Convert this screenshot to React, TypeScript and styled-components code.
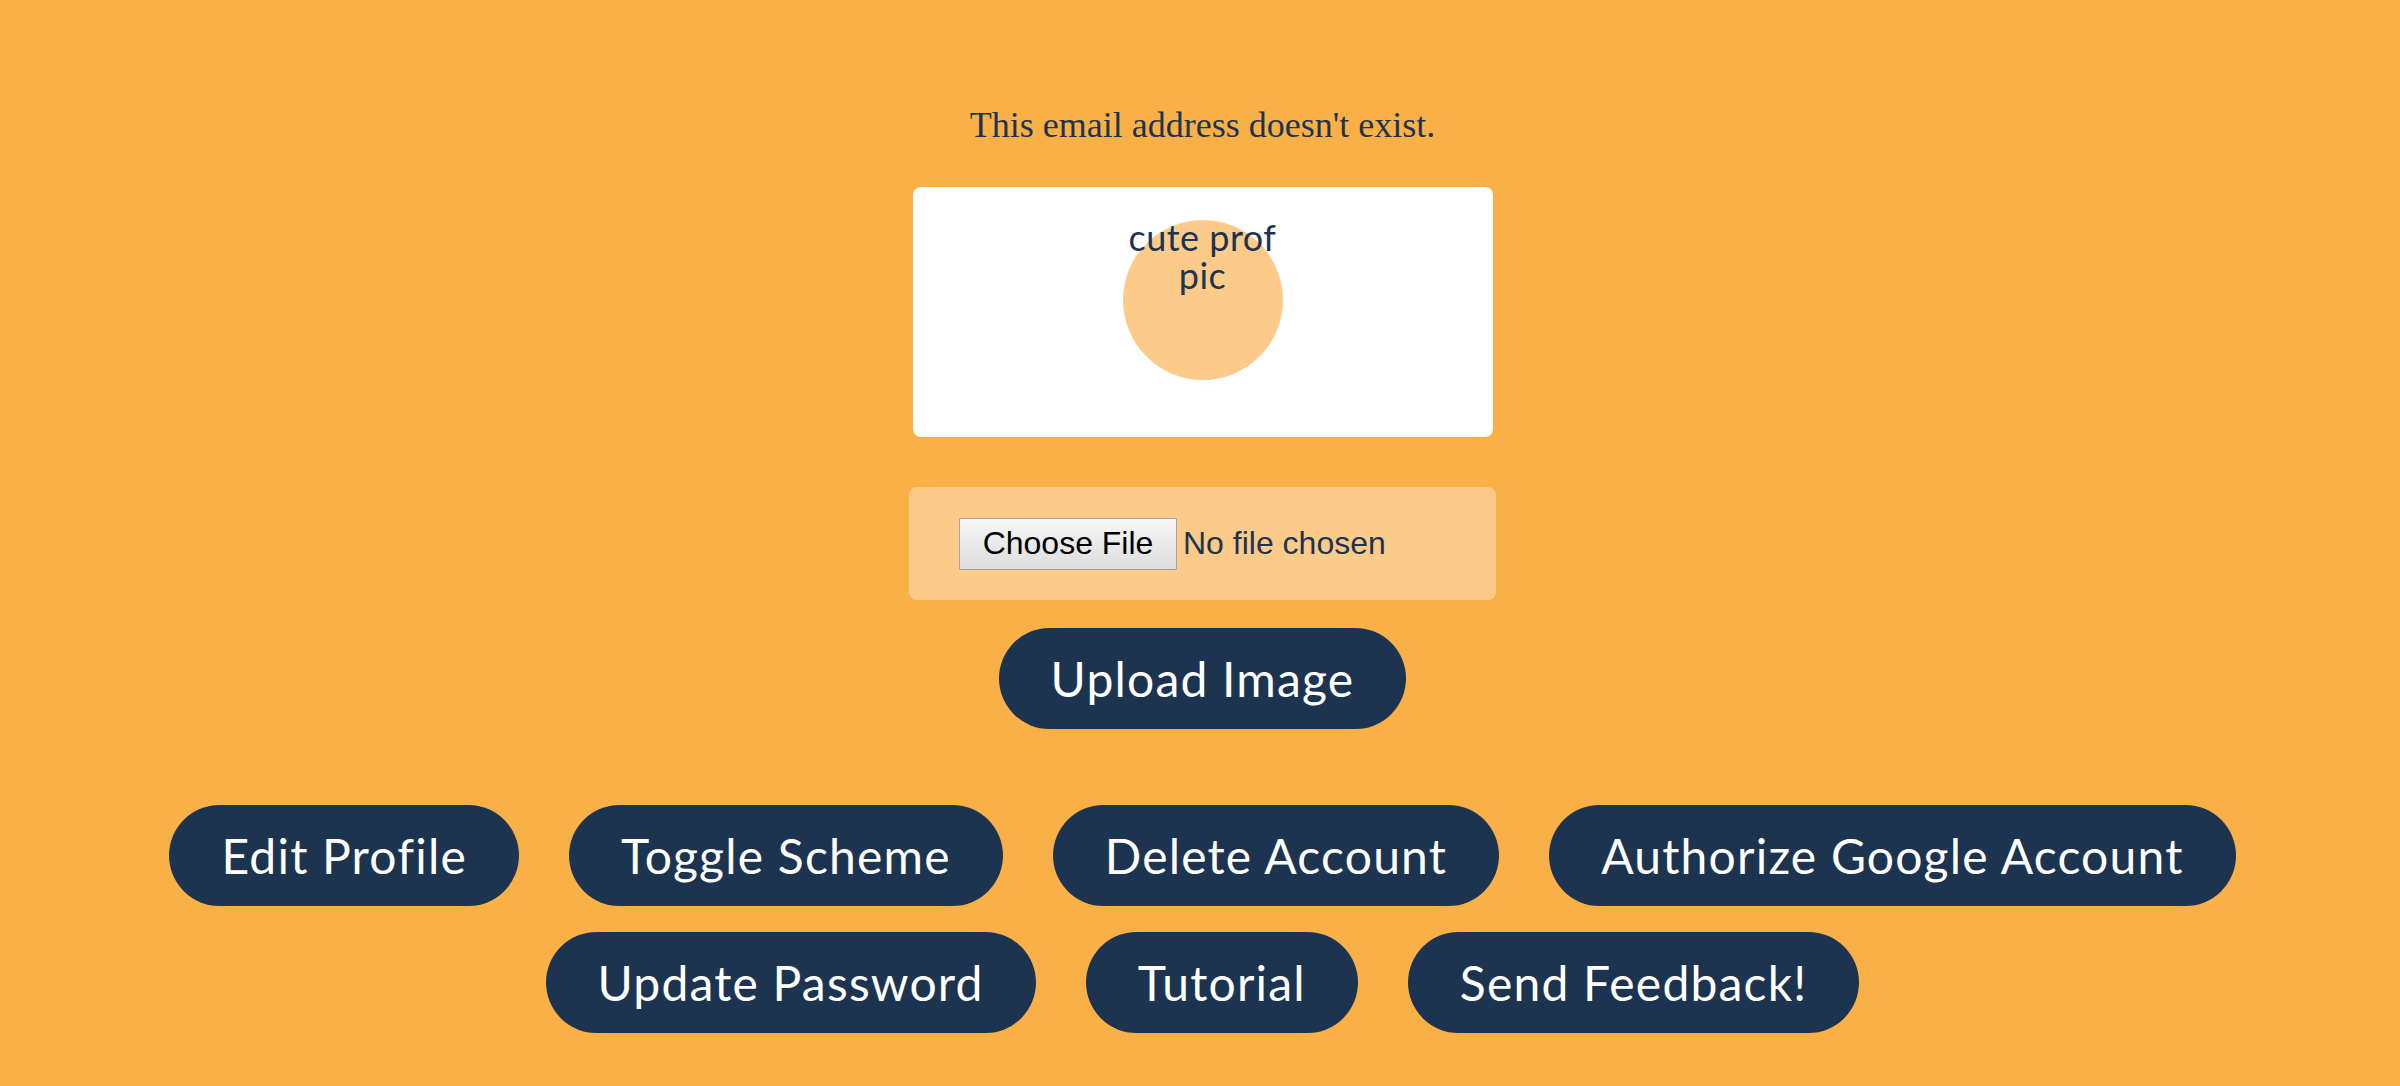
import React from "react";
import styled, { createGlobalStyle } from "styled-components";

const Global = createGlobalStyle`
  html, body { margin: 0; padding: 0; background: #f9b046; }
  body { font-family: "Lato", "Liberation Sans", sans-serif; }
`;

const Page = styled.main`
  min-height: 1086px;
  box-sizing: border-box;
  padding: 105px 0 0 5px;
  display: flex;
  flex-direction: column;
  align-items: center;
`;

const Notice = styled.p`
  margin: 0;
  font-family: "Liberation Serif", serif;
  font-size: 36px;
  line-height: 40px;
  color: #1d3451;
`;

const Card = styled.section`
  margin-top: 42px;
  width: 580px;
  height: 250px;
  box-sizing: border-box;
  padding-top: 33px;
  background: #ffffff;
  border-radius: 8px;
  display: flex;
  justify-content: center;
`;

const Avatar = styled.div`
  width: 160px;
  height: 160px;
  border-radius: 50%;
  background: #fccb8a;
  color: #1d3451;
  font-family: "Lato", sans-serif;
  font-size: 36px;
  letter-spacing: 0.5px;
  line-height: 38px;
  text-align: center;
  display: flex;
  justify-content: center;
`;

const AvatarText = styled.span`
  width: 170px;
  flex: none;
  margin-top: -2px;
`;

const FileBox = styled.div`
  margin-top: 50px;
  width: 587px;
  height: 113px;
  box-sizing: border-box;
  padding: 30px 50px;
  background: #fccb8a;
  border-radius: 8px;
  display: flex;
  align-items: center;
`;

const FileButton = styled.button`
  height: 52px;
  width: 218px;
  box-sizing: border-box;
  padding: 0;
  border: 1px solid #a3a3a3;
  border-radius: 1px;
  background: linear-gradient(#f7f7f7, #dddddd);
  font-family: "Liberation Sans", Arial, sans-serif;
  font-size: 32px;
  color: #000;
`;

const FileStatus = styled.span`
  margin-left: 6px;
  font-family: "Liberation Sans", Arial, sans-serif;
  font-size: 32px;
  color: #1d3451;
`;

const PillButton = styled.button`
  height: 101px;
  padding: 0 52px;
  border: none;
  border-radius: 51px;
  background: #1c3450;
  color: #ffffff;
  font-family: "Lato", sans-serif;
  font-size: 48px;
  letter-spacing: 1.2px;
  white-space: nowrap;
`;

const UploadButton = styled(PillButton)`
  margin-top: 28px;
`;

const ActionGrid = styled.div`
  margin-top: 76px;
  width: 100%;
  display: flex;
  flex-wrap: wrap;
  justify-content: center;
  column-gap: 50px;
  row-gap: 26px;
`;

const actions = [
  "Edit Profile",
  "Toggle Scheme",
  "Delete Account",
  "Authorize Google Account",
  "Update Password",
  "Tutorial",
  "Send Feedback!",
];

export default function App() {
  return (
    <>
      <Global />
      <Page>
        <Notice>This email address doesn't exist.</Notice>
        <Card>
          <Avatar>
            <AvatarText>cute prof pic</AvatarText>
          </Avatar>
        </Card>
        <FileBox>
          <FileButton type="button">Choose File</FileButton>
          <FileStatus>No file chosen</FileStatus>
        </FileBox>
        <UploadButton type="button">Upload Image</UploadButton>
        <ActionGrid>
          {actions.map((a) => (
            <PillButton key={a} type="button">
              {a}
            </PillButton>
          ))}
        </ActionGrid>
      </Page>
    </>
  );
}
